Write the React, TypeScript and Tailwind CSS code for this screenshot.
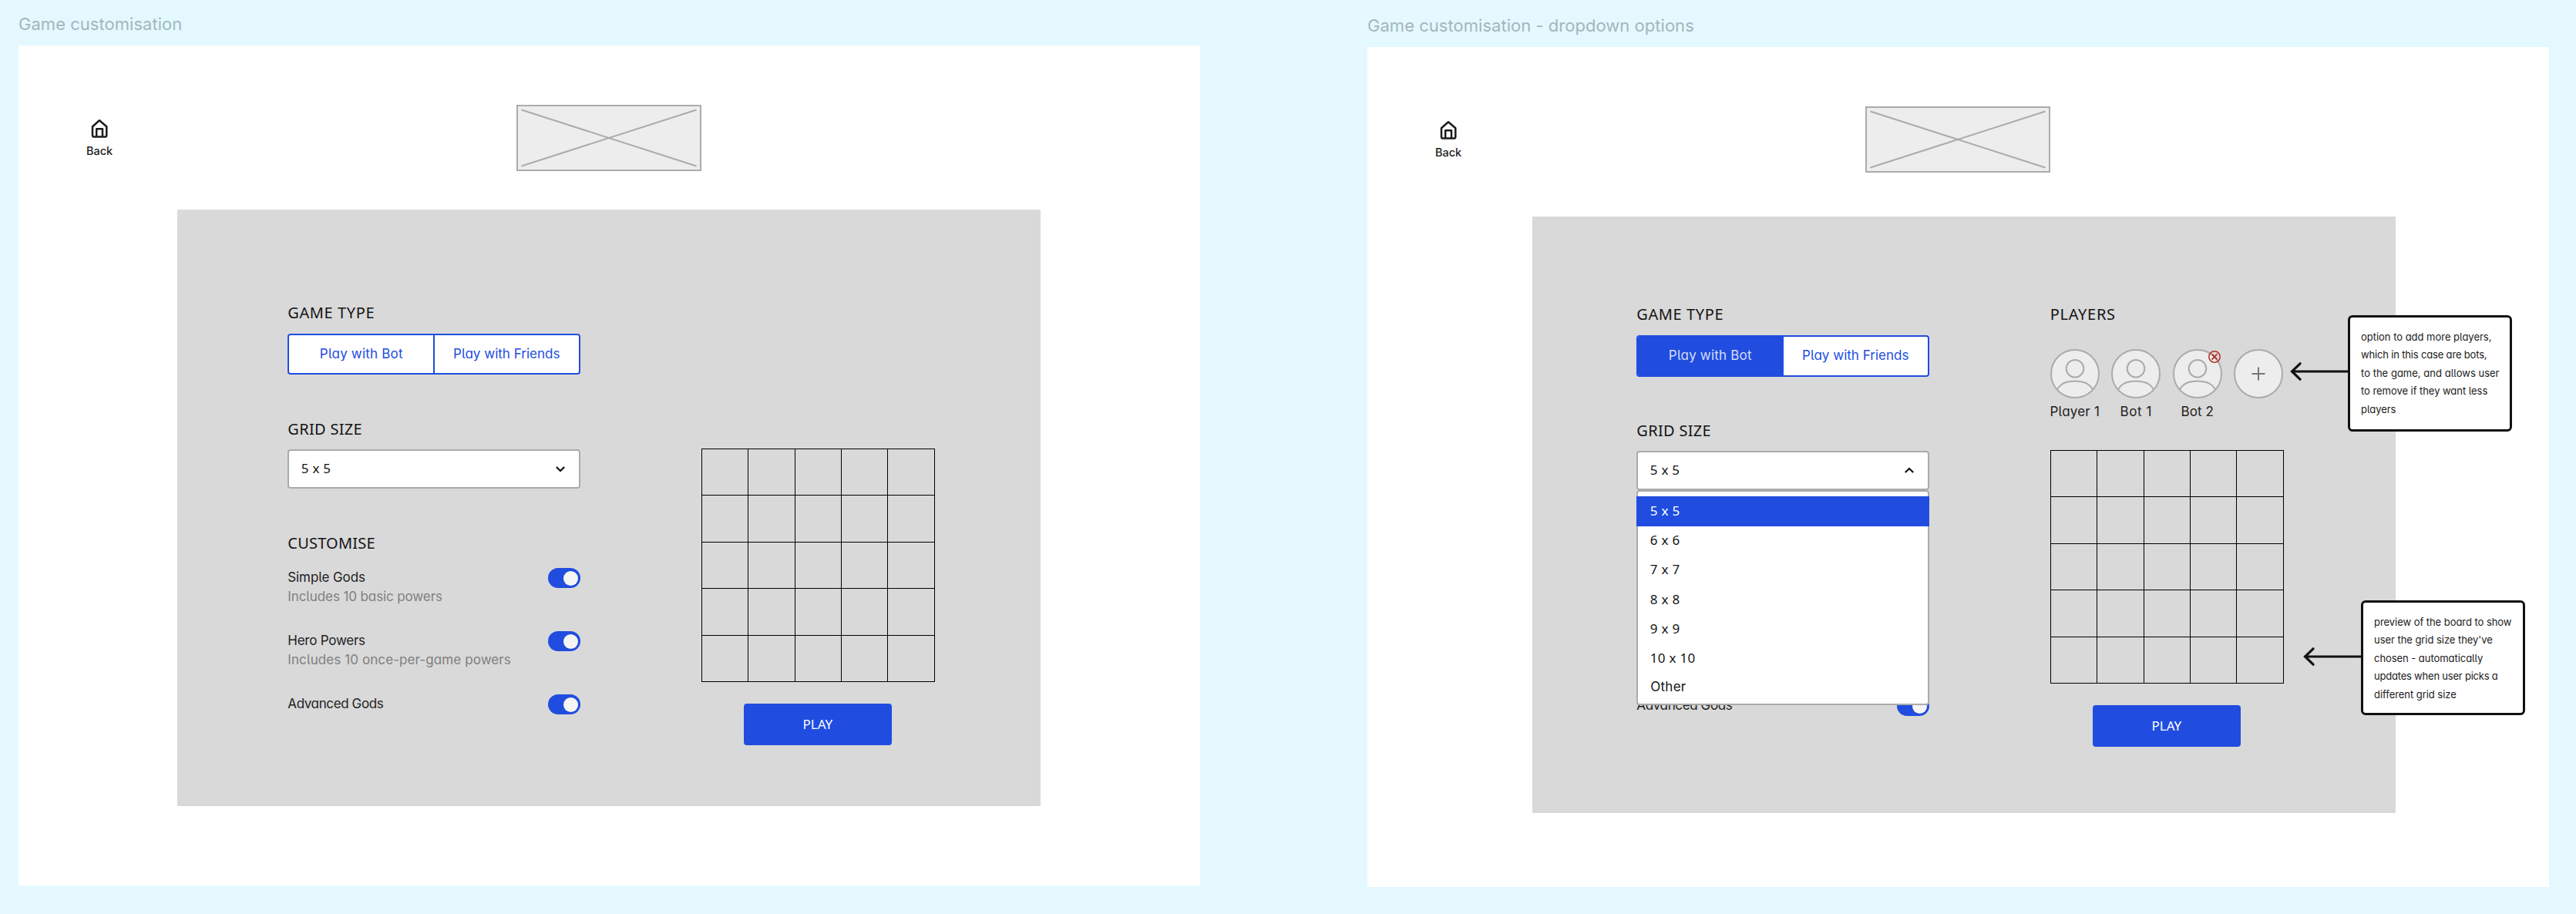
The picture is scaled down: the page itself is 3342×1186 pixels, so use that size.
import type { ReactNode } from "react";

const body = "font-['Inter','Noto_Sans',sans-serif] [font-feature-settings:'cv11','cv05','calt'_0] whitespace-nowrap";
const caps = "font-['Noto_Sans',sans-serif] whitespace-nowrap";

function Heading({ children, className }: { children: ReactNode; className: string }) {
  return <h2 className={`${caps} h-6 text-[20px] leading-6 text-[#141414] ${className}`}>{children}</h2>;
}

function HomeIcon() {
  return (
    <svg width="24" height="26" viewBox="0 0 24 26" fill="none" stroke="#1c1c1c" strokeWidth="2.5" strokeLinejoin="round">
      <path d="M3 10.2 L12 2.2 L21.3 10.2 V21.4 Q21.3 23.6 19.1 23.6 H5.2 Q3 23.6 3 21.4 Z" />
      <path d="M8.2 23.4 V13.2 H16 V23.4" />
    </svg>
  );
}

function LogoPlaceholder() {
  return (
    <div className="-ml-px h-[86px] w-[240px] border-2 border-[#ababab] bg-[#ededed]">
      <svg width="236" height="82" viewBox="0 0 236 82" stroke="#ababab" strokeWidth="2">
        <path d="M4.5 4.5 L231.5 77.5 M231.5 4.5 L4.5 77.5" />
      </svg>
    </div>
  );
}

function Segmented({ botActive }: { botActive: boolean }) {
  return (
    <div className="mt-[15px] flex h-[53.5px] overflow-hidden rounded-[4px] border-2 border-[#204ddf] bg-white text-[17px] text-[#204ddf]">
      <div
        className={`${body} flex w-[187px] items-center justify-center tracking-[0.2px] ${
          botActive ? "bg-[#204ddf] text-[#d5ddf9]" : ""
        }`}
      >
        Play with Bot
      </div>
      <div className={`${body} flex flex-1 items-center justify-center border-l-2 border-[#204ddf] pr-[1px] tracking-[0.02px]`}>
        Play with Friends
      </div>
    </div>
  );
}

function Chevron({ up }: { up: boolean }) {
  return (
    <svg width="14" height="9" viewBox="0 0 14 9" fill="none" stroke="#141414" strokeWidth="2.3">
      <path d={up ? "M1.8 7 L7 2 L12.2 7" : "M1.8 2 L7 7 L12.2 2"} />
    </svg>
  );
}

const sizes = ["5 x 5", "6 x 6", "7 x 7", "8 x 8", "9 x 9", "10 x 10"];

function SizeSelect({ open }: { open: boolean }) {
  return (
    <div className="relative mt-[13.8px]">
      <div className="flex h-[51px] items-center justify-between rounded-[4px] border-2 border-[#ababab] bg-white pr-[17.5px] pb-[1px] pl-[15.5px]">
        <span className={`${caps} text-[17px] tracking-[0.24px] text-[#141414]`}>5 x 5</span>
        <Chevron up={open} />
      </div>
      {open && (
        <div className="absolute top-[51px] left-0 z-10 h-[279px] w-full rounded-[4px] border-2 border-[#ababab] bg-white pt-[6.3px]">
          {sizes.map((s, i) => (
            <div
              key={s}
              className={`${caps} -mx-[2px] flex h-[38.3px] items-center pb-[2px] pl-[17.5px] text-[17px] tracking-[0.3px] ${
                i === 0 ? "bg-[#204ddf] text-white" : "text-[#141414]"
              }`}
            >
              {s}
            </div>
          ))}
          <div className={`${body} flex h-[36px] items-center pl-[16px] text-[17px] tracking-[0.25px] text-[#141414]`}>Other</div>
        </div>
      )}
    </div>
  );
}

function Option({ name, hint, nameTrack, hintTrack }: { name: string; hint?: string; nameTrack: string; hintTrack?: string }) {
  return (
    <div className="flex h-[82px] items-start justify-between text-[17px] leading-[24.7px]">
      <div className={body}>
        <p className={`text-[#222] ${nameTrack}`}>{name}</p>
        {hint && <p className={`text-[#808080] ${hintTrack}`}>{hint}</p>}
      </div>
      <div className="flex h-[26px] w-[42.5px] items-center justify-end rounded-full bg-[#204ddf] pr-[3px]">
        <div className="size-[19.5px] rounded-full bg-[#f5f5f5]" />
      </div>
    </div>
  );
}

function Player({ name, track, removable }: { name: string; track: string; removable?: boolean }) {
  return (
    <div className="relative flex w-16 flex-col items-center">
      <svg width="64" height="64" viewBox="0 0 64 64" fill="#ededed" stroke="#ababab" strokeWidth="2">
        <circle cx="32" cy="32" r="31" />
        <circle cx="32" cy="25.3" r="11.3" />
        <path d="M9 52.5 C13 45 22 41.6 32 41.6 C42 41.6 51 45 55 52.5" />
      </svg>
      {removable && (
        <svg className="absolute top-[0.5px] left-[45.5px]" width="18" height="18" viewBox="0 0 18 18" fill="none" stroke="#b5332b" strokeWidth="1.6">
          <circle cx="9" cy="9" r="7.2" />
          <path d="M5.6 5.4 L12.4 12.6 M12.4 5.4 L5.6 12.6" strokeWidth="1.9" />
        </svg>
      )}
      <span className={`${body} mt-[6.5px] text-[17px] leading-5 text-[#222] ${track}`}>{name}</span>
    </div>
  );
}

function Players() {
  return (
    <>
      <Heading className="tracking-[0.7px]">PLAYERS</Heading>
      <div className="mt-[33px] flex gap-[15.5px]">
        <Player name="Player 1" track="tracking-[0.2px]" />
        <Player name="Bot 1" track="tracking-[0.6px]" />
        <Player name="Bot 2" track="tracking-[0.1px]" removable />
        <svg width="64" height="64" viewBox="0 0 64 64" fill="#ededed" stroke="#ababab" strokeWidth="2">
          <circle cx="32" cy="32" r="31" />
          <path d="M23.5 32 H40.5 M32 23.5 V40.5" stroke="#757575" />
        </svg>
      </div>
    </>
  );
}

function Board() {
  return (
    <div className="grid size-[303px] grid-cols-5 grid-rows-5 border-t border-l border-black">
      {Array.from({ length: 25 }, (_, i) => (
        <div key={i} className="border-r border-b border-black" />
      ))}
    </div>
  );
}

function Screen({ title, dropdown, panelClass, children }: { title: string; dropdown: boolean; panelClass: string; children?: ReactNode }) {
  return (
    <section className="flex flex-col">
      <h1 className="mb-[14px] h-7 font-['Inter',sans-serif] text-[22px] leading-7 tracking-[0.03px] whitespace-nowrap text-[#a4b6ba]">{title}</h1>
      <div className="relative h-[1090px] w-[1533px] bg-white">
        <header className="grid grid-cols-[1fr_240px_1fr] items-start pt-[77px]">
          <div className="mt-[18px] ml-[86.5px] flex w-[37px] flex-col items-center">
            <HomeIcon />
            <span className="mt-[6px] font-['Inter',sans-serif] text-[14.5px] leading-5 font-medium text-[#1c1c1c]">Back</span>
          </div>
          <LogoPlaceholder />
        </header>
        <main className={`flex w-[1120px] bg-[#d9d9d9] ${panelClass}`}>
          <div className="w-[380px]">
            <Heading className="tracking-[0.6px]">GAME TYPE</Heading>
            <Segmented botActive={dropdown} />
            <Heading className="mt-[58.8px] tracking-[0.3px]">GRID SIZE</Heading>
            <SizeSelect open={dropdown} />
            {dropdown ? (
              <div className="h-[267.2px]" />
            ) : (
              <div className="h-[267.2px] pt-[59.2px]">
                <Heading className="mb-[20px] tracking-[0.2px]">CUSTOMISE</Heading>
                <Option name="Simple Gods" nameTrack="tracking-[-0.11px]" hint="Includes 10 basic powers" hintTrack="tracking-[-0.11px]" />
                <Option name="Hero Powers" nameTrack="tracking-[-0.24px]" hint="Includes 10 once-per-game powers" hintTrack="tracking-[0.09px]" />
              </div>
            )}
            <Option name="Advanced Gods" nameTrack="tracking-[-0.38px]" />
          </div>
          <div className="ml-[156.5px] flex w-[303px] flex-col">
            <div className="h-[188px]">{dropdown && <Players />}</div>
            <Board />
            <button className={`${caps} mt-[28px] h-[54px] w-[192px] self-center rounded-[4px] bg-[#204ddf] pr-[1px] text-[17px] text-white`}>PLAY</button>
          </div>
        </main>
        {children}
      </div>
    </section>
  );
}

function Callout({ lines, className, boxClass }: { lines: [string, string][]; className: string; boxClass: string }) {
  return (
    <div className={`absolute flex items-start ${className}`}>
      <svg className="mt-[59px] -mr-[1px]" width="76" height="28" viewBox="0 0 76 28" fill="none" stroke="#111" strokeWidth="3.2" strokeLinecap="round">
        <path d="M76 14 H2.5 M13 3.8 L2.5 14 L13 24.2" />
      </svg>
      <div className={`w-[213px] rounded-[6px] border-3 border-[#111] bg-white pt-[14px] pl-[14px] ${boxClass}`}>
        {lines.map(([text, track]) => (
          <p key={text} className={`${body} text-[13px] leading-[23.45px] text-[#1a1a1a] ${track}`}>
            {text}
          </p>
        ))}
      </div>
    </div>
  );
}

export default function App() {
  return (
    <div className="flex h-[1186px] w-[3342px] gap-[217px] overflow-hidden bg-[#e3f9ff] pt-[17px] pl-[24px]">
      <Screen title="Game customisation" dropdown={false} panelClass="mt-[50.4px] ml-[206.3px] h-[774px] pt-[121.6px] pl-[143px]" />
      <div className="pt-[2px]">
        <Screen title="Game customisation - dropdown options" dropdown panelClass="mt-[57px] ml-[214px] h-[774px] pt-[115px] pl-[135.3px]">
          <Callout
            className="top-[348px] left-[1197px]"
            boxClass="h-[151px]"
            lines={[
              ["option to add more players,", "tracking-[-0.02px]"],
              ["which in this case are bots,", "tracking-[-0.17px]"],
              ["to the game, and allows user", "tracking-[0.02px]"],
              ["to remove if they want less", "tracking-[-0.05px]"],
              ["players", "tracking-[-0.05px]"],
            ]}
          />
          <Callout
            className="top-[718px] left-[1214px]"
            boxClass="h-[149px]"
            lines={[
              ["preview of the board to show", "tracking-[-0.05px]"],
              ["user the grid size they've", "tracking-[-0.05px]"],
              ["chosen - automatically", "tracking-[-0.05px]"],
              ["updates when user picks a", "tracking-[-0.21px]"],
              ["different grid size", "tracking-[-0.05px]"],
            ]}
          />
        </Screen>
      </div>
    </div>
  );
}
